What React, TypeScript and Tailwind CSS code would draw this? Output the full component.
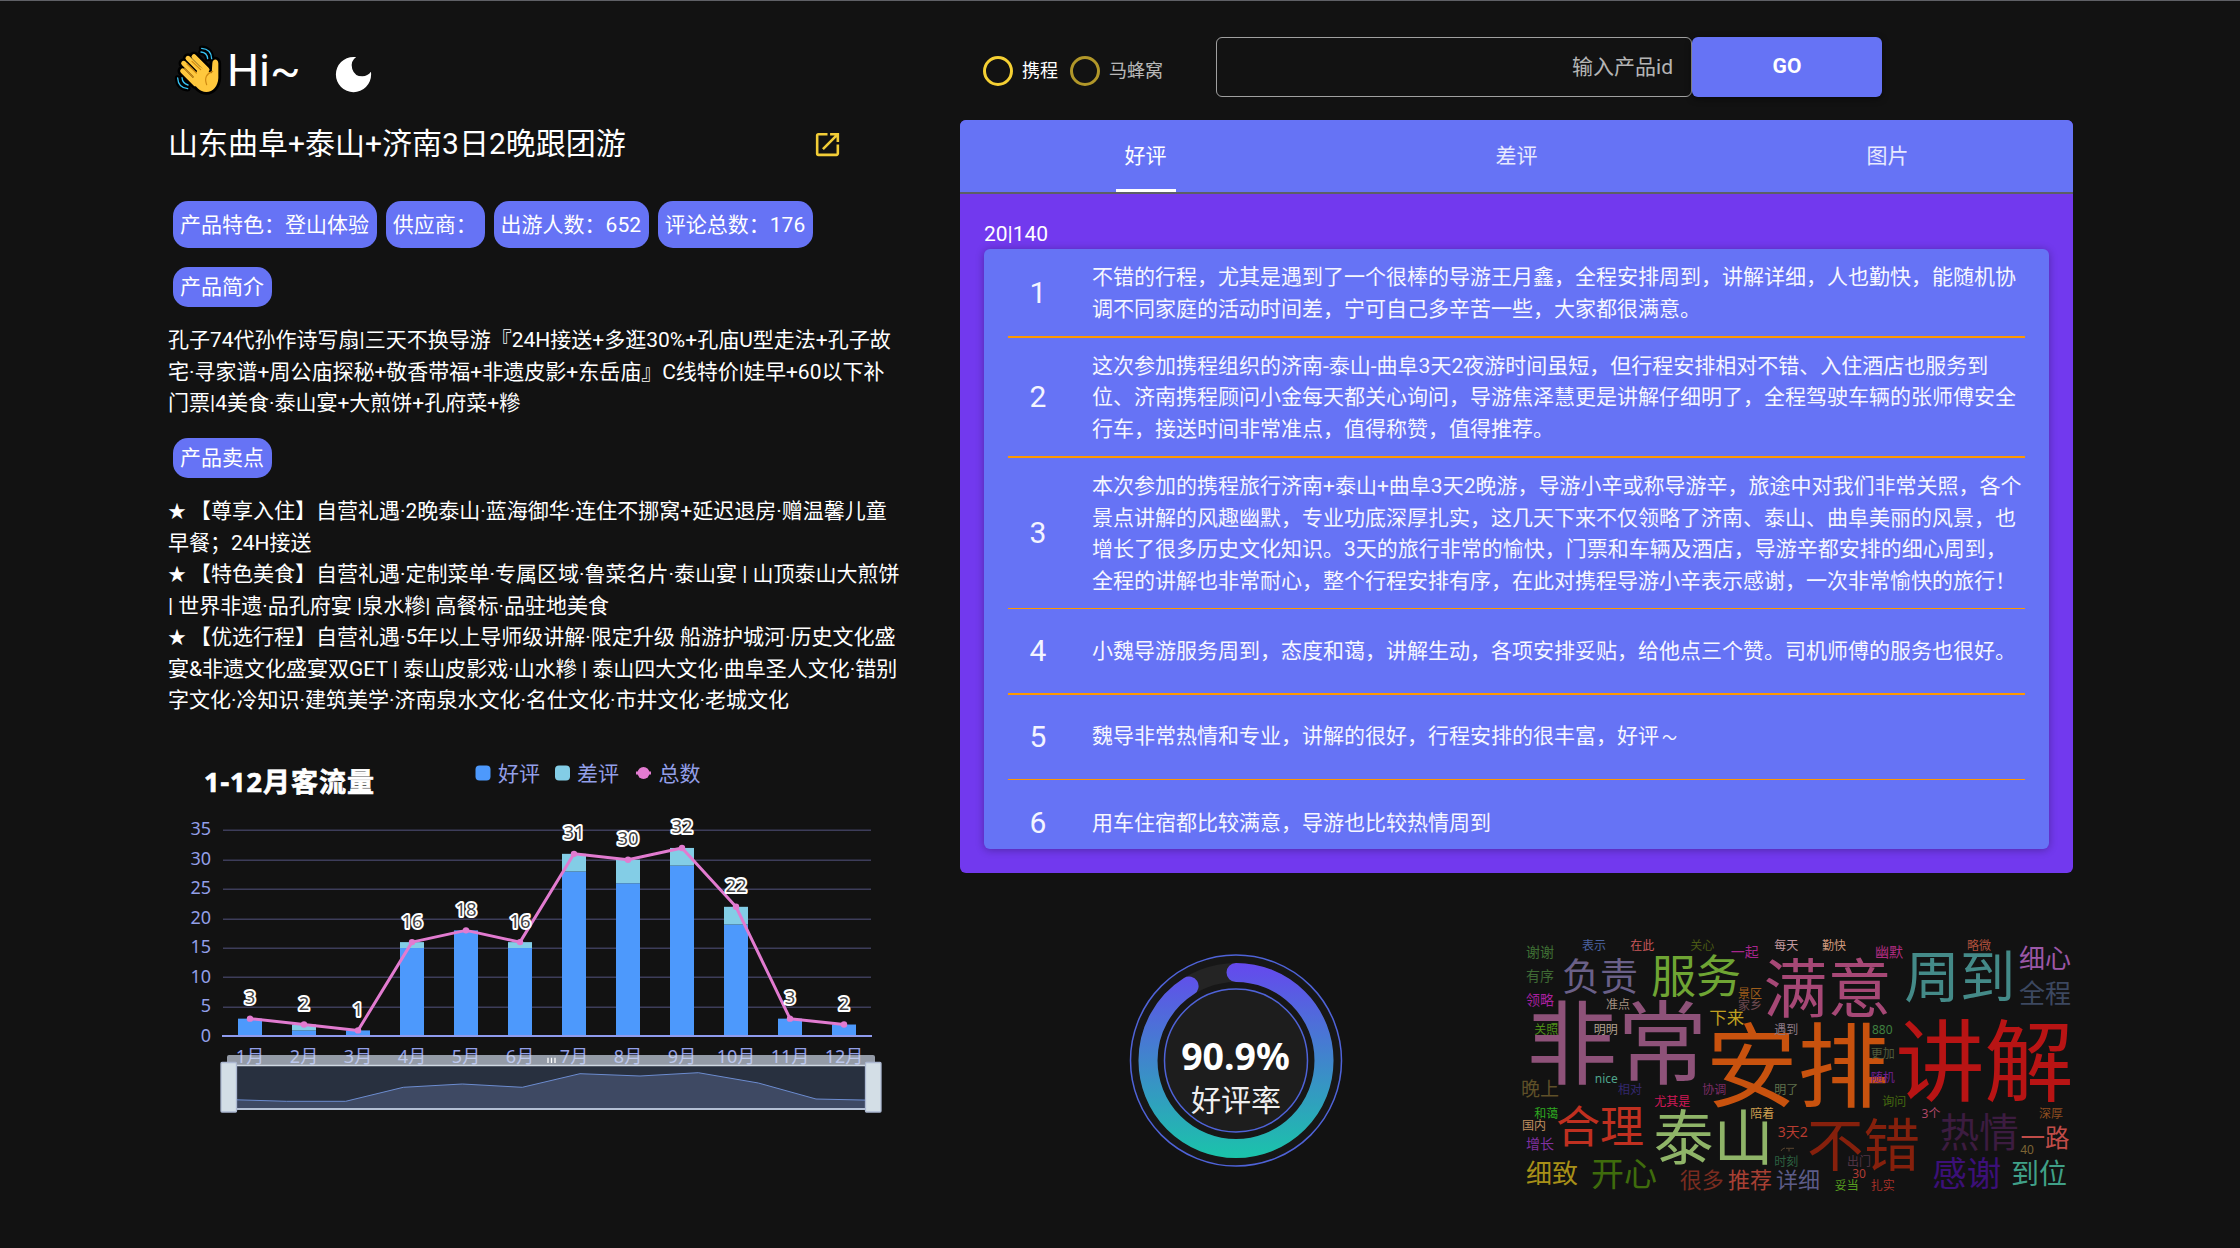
import { MdDarkMode, MdOpenInNew } from "react-icons/md";

const CHIPS = ["产品特色：登山体验", "供应商：", "出游人数：652", "评论总数：176"];

const INTRO = [
  "孔子74代孙作诗写扇|三天不换导游『24H接送+多逛30%+孔庙U型走法+孔子故",
  "宅·寻家谱+周公庙探秘+敬香带福+非遗皮影+东岳庙』C线特价|娃早+60以下补",
  "门票|4美食·泰山宴+大煎饼+孔府菜+糝",
];

const SELLING = [
  { star: true, text: "【尊享入住】自营礼遇·2晚泰山·蓝海御华·连住不挪窝+延迟退房·赠温馨儿童" },
  { star: false, text: "早餐；24H接送" },
  { star: true, text: "【特色美食】自营礼遇·定制菜单·专属区域·鲁菜名片·泰山宴 | 山顶泰山大煎饼" },
  { star: false, text: "| 世界非遗·品孔府宴 |泉水糝| 高餐标·品驻地美食" },
  { star: true, text: "【优选行程】自营礼遇·5年以上导师级讲解·限定升级 船游护城河·历史文化盛" },
  { star: false, text: "宴&非遗文化盛宴双GET | 泰山皮影戏·山水糝 | 泰山四大文化·曲阜圣人文化·错别" },
  { star: false, text: "字文化·冷知识·建筑美学·济南泉水文化·名仕文化·市井文化·老城文化" },
];

const COMMENTS = [
  {
    row: "h-[89px] border-b-2",
    lines: [
      "不错的行程，尤其是遇到了一个很棒的导游王月鑫，全程安排周到，讲解详细，人也勤快，能随机协",
      "调不同家庭的活动时间差，宁可自己多辛苦一些，大家都很满意。",
    ],
  },
  {
    row: "h-[120px] border-b-2",
    lines: [
      "这次参加携程组织的济南-泰山-曲阜3天2夜游时间虽短，但行程安排相对不错、入住酒店也服务到",
      "位、济南携程顾问小金每天都关心询问，导游焦泽慧更是讲解仔细明了，全程驾驶车辆的张师傅安全",
      "行车，接送时间非常准点，值得称赞，值得推荐。",
    ],
  },
  {
    row: "h-[151px] border-b",
    lines: [
      "本次参加的携程旅行济南+泰山+曲阜3天2晚游，导游小辛或称导游辛，旅途中对我们非常关照，各个",
      "景点讲解的风趣幽默，专业功底深厚扎实，这几天下来不仅领略了济南、泰山、曲阜美丽的风景，也",
      "增长了很多历史文化知识。3天的旅行非常的愉快，门票和车辆及酒店，导游辛都安排的细心周到，",
      "全程的讲解也非常耐心，整个行程安排有序，在此对携程导游小辛表示感谢，一次非常愉快的旅行！",
    ],
  },
  {
    row: "h-[86px] border-b-2",
    lines: ["小魏导游服务周到，态度和蔼，讲解生动，各项安排妥贴，给他点三个赞。司机师傅的服务也很好。"],
  },
  {
    row: "h-[85px] border-b",
    lines: ["魏导非常热情和专业，讲解的很好，行程安排的很丰富，好评"],
    wave: true,
  },
  { row: "h-[86px]", lines: ["用车住宿都比较满意，导游也比较热情周到"] },
];

const MONTHS = [
  [3, 0], [1, 1], [1, 0], [15, 1], [18, 0], [15, 1],
  [28, 3], [26, 4], [29, 3], [19, 3], [3, 0], [2, 0],
];

const ZOOM_LINE =
  "227,1099.5 286.5,1101.3 345.7,1101.3 403.3,1087.3 462.3,1084 522.3,1087.3 580,1073.7 640,1076 698.3,1072.7 758.3,1083 816,1099 875,1100.3";

/* word, centre x, centre y, font size, colour */
const WORDS: [string, number, number, number, string][] = [
  ["谢谢", 1540, 951.3, 14, "#3f7034"],
  ["表示", 1594, 944.7, 12, "#4b63a0"],
  ["在此", 1642.3, 944.7, 12, "#c8585a"],
  ["关心", 1702.3, 944.7, 12, "#4a5a14"],
  ["一起", 1744.7, 951, 14, "#a8258c"],
  ["每天", 1786.3, 944.7, 12, "#c49aa0"],
  ["负责", 1600, 974.7, 38, "#6a6088"],
  ["服务", 1696, 975.7, 45, "#6fa534"],
  ["有序", 1540, 975.3, 14, "#3f6a34"],
  ["领略", 1540, 999, 14, "#a820a0"],
  ["非常", 1617, 1042.3, 90.5, "#8e5279"],
  ["准点", 1618, 1004.3, 12, "#a39080"],
  ["关照", 1546.3, 1028.7, 12, "#4f9018"],
  ["明明", 1605.7, 1028.7, 12, "#b0a090"],
  ["景区", 1750, 992.7, 12, "#a05f1c"],
  ["家乡", 1750, 1004.7, 12, "#6e4a50"],
  ["下来", 1726.7, 1017.3, 17.5, "#c0a020"],
  ["安排", 1797.5, 1065.3, 91.5, "#c8520e"],
  ["遇到", 1786.3, 1028.7, 12, "#8c7a86"],
  ["nice", 1606.3, 1077.5, 12, "#4fa58c"],
  ["晚上", 1540, 1088.3, 19, "#5f5028"],
  ["相对", 1630, 1088.7, 12, "#33286e"],
  ["协调", 1714.3, 1088.7, 12, "#7a2c64"],
  ["明了", 1786.3, 1088.7, 12, "#60714c"],
  ["尤其是", 1672.3, 1100.7, 12, "#d01858"],
  ["和蔼", 1546.3, 1113, 12, "#2ea820"],
  ["国内", 1534, 1124.7, 12, "#c09060"],
  ["合理", 1600, 1125.7, 44, "#c03020"],
  ["泰山", 1713.5, 1137, 60, "#8fb468"],
  ["陪着", 1762.3, 1112.7, 12, "#d0a050"],
  ["3天2", 1792.7, 1131, 14, "#b83c30"],
  ["增长", 1540, 1143, 14, "#8030a0"],
  ["细致", 1552, 1173, 26, "#a89018"],
  ["开心", 1624, 1172.7, 33, "#3f6c0c"],
  ["很多", 1701.7, 1179.3, 22, "#7a2c20"],
  ["推荐", 1750, 1179.3, 22, "#a84034"],
  ["详细", 1798, 1179.3, 22, "#5c5c88"],
  ["时刻", 1786.3, 1160.7, 12, "#2c6040"],
  ["勤快", 1834, 944.7, 12, "#d09a7c"],
  ["幽默", 1889, 951.3, 14, "#b02c80"],
  ["略微", 1979, 944.7, 12, "#b0503c"],
  ["满意", 1827.5, 987.3, 64, "#a64876"],
  ["周到", 1959.7, 976, 55.5, "#448a88"],
  ["细心", 2045, 957.3, 26, "#9c58a8"],
  ["全程", 2045, 992.7, 26, "#3c4860"],
  ["880", 1882.3, 1028.7, 12, "#3f8040"],
  ["更加", 1882.7, 1052.7, 12, "#505c3c"],
  ["随机", 1882.7, 1076.7, 12, "#702090"],
  ["询问", 1894.3, 1100.7, 12, "#456810"],
  ["讲解", 1984.5, 1060, 89, "#b81414"],
  ["3个", 1931, 1112.7, 12, "#b04868"],
  ["热情", 1979.3, 1131.3, 39.5, "#3c1c40"],
  ["深厚", 2051, 1112.7, 12, "#904e20"],
  ["不错", 1863.5, 1144.2, 56.5, "#86200c"],
  ["一路", 2045, 1137.3, 24.5, "#c04c48"],
  ["40", 2027, 1148.7, 12, "#7c6434"],
  ["感谢", 1966.7, 1172.3, 34.5, "#3c1078"],
  ["到位", 2039, 1173.3, 28, "#40a088"],
  ["出门", 1859, 1160.7, 12, "#503444"],
  ["30", 1859, 1172.7, 12, "#b03c34"],
  ["妥当", 1846.7, 1185, 12, "#58a020"],
  ["扎实", 1882.7, 1185, 12, "#a83028"],
];

function WavingHand() {
  const fingers = "M101 62 L140 101 M83 67 L125 109 M70 82 L112 124 M67 105 L105 143";
  const palm =
    "M118 92 L154 112 L156 82 C157 67 173 67 174 82 L174 126 C173 150 158 168 138 168 C118 168 106 152 94 132 Z";
  const waves =
    "M124 37 C141 38 153 49 154 68 M122 48 C133 49 141 57 142 68 M52 126 C53 145 64 156 82 158 M65 125 C66 137 72 144 83 147";
  return (
    <svg className="h-[52px] w-[49px] shrink-0" viewBox="38 24 147 156">
      <g stroke="#000" strokeLinecap="round" strokeLinejoin="round" fill="none">
        <path d={fingers} strokeWidth="31" />
        <path d={palm} fill="#000" strokeWidth="17" />
        <path d={waves} strokeWidth="17" />
      </g>
      <path d={fingers} stroke="#ffc83d" strokeWidth="15" strokeLinecap="round" fill="none" />
      <path d={palm} fill="#ffc83d" />
      <g stroke="#d08a12" strokeWidth="3.6" strokeLinecap="round" fill="none">
        <path d="M73 98 L98 123 M80 84 L108 111 M95 76 L121 101" />
        <path d="M157 106 C139 112 131 126 139 146" />
      </g>
      <path d={waves} stroke="#35c1f1" strokeWidth="4" strokeLinecap="round" fill="none" />
    </svg>
  );
}

function TrafficChart() {
  const x = (i: number) => 250 + 54 * i;
  const y = (v: number) => 1036.3 - 5.886 * v;
  const totals = MONTHS.map(([a, b]) => a + b);
  return (
    <svg
      className="h-[390px] w-[740px] font-['Noto_Sans','Noto_Sans_CJK_SC',sans-serif]"
      viewBox="168 740 740 390"
    >
      <text x="204" y="792" fontSize="27" fontWeight="700" fill="#fff" stroke="#fff" strokeWidth="0.7" textLength="170">
        1-12月客流量
      </text>
      <g fontSize="21" fill="#929fe8">
        <rect x="475.5" y="765.5" width="15" height="15" rx="4" fill="#4d99fc" />
        <text x="498" y="780.5">好评</text>
        <rect x="555" y="765.5" width="15" height="15" rx="4" fill="#83cde6" />
        <text x="577" y="780.5">差评</text>
        <path d="M636 773 H651" stroke="#e27bd0" strokeWidth="3" />
        <circle cx="643.5" cy="773" r="6" fill="#e27bd0" />
        <text x="658.5" y="780.5">总数</text>
      </g>
      {[5, 10, 15, 20, 25, 30, 35].map((v) => (
        <path key={v} d={`M223 ${Math.round(y(v)) + 0.3} H871`} stroke="#3d3d5a" strokeWidth="1.5" />
      ))}
      {[0, 5, 10, 15, 20, 25, 30, 35].map((v) => (
        <text key={v} x="211" y={y(v) + 5.2} fontSize="18" textAnchor="end" fill="#929fe8">
          {v}
        </text>
      ))}
      {MONTHS.map(([good, bad], i) => (
        <g key={i}>
          <rect x={x(i) - 12} y={y(good)} width="24" height={1036 - y(good)} fill="#4d99fc" />
          <rect x={x(i) - 12} y={y(good + bad)} width="24" height={y(good) - y(good + bad)} fill="#83cde6" />
          <text x={x(i)} y="1063" fontSize="18" textAnchor="middle" fill="#929fe8">
            {i + 1}月
          </text>
        </g>
      ))}
      <path d="M222 1036 H872" stroke="#8f9bee" strokeWidth="1.8" />
      <polyline
        points={totals.map((t, i) => `${x(i)},${y(t)}`).join(" ")}
        fill="none"
        stroke="#e27bd0"
        strokeWidth="3"
        strokeLinejoin="bevel"
      />
      {totals.map((t, i) => (
        <g key={i}>
          <circle cx={x(i)} cy={y(t)} r="3.2" fill="#e27bd0" />
          <text
            x={x(i)}
            y={y(t) - 14.5}
            fontSize="18.5"
            textAnchor="middle"
            fill="#444"
            stroke="#fff"
            strokeWidth="4"
            strokeLinejoin="round"
            paintOrder="stroke"
          >
            {t}
          </text>
        </g>
      ))}
      <path d="M227 1065 V1057 Q227 1055 229 1055 H873 Q875 1055 875 1057 V1065 Z" fill="#d2dbee" fillOpacity="0.68" />
      <path d="M548 1057.7 V1063 M551.5 1057.7 V1063 M555 1057.7 V1063" stroke="#fff" strokeWidth="1.3" />
      <rect x="227" y="1065" width="648" height="44" fill="#28303f" />
      <polygon points={`227,1108 ${ZOOM_LINE} 875,1108`} fill="#3e4963" />
      <polyline points={ZOOM_LINE} fill="none" stroke="#6c8cd0" strokeWidth="1" />
      <path d="M227 1065.5 H875" stroke="#cfd8e2" strokeWidth="1.4" />
      <path d="M227 1109 H875" stroke="#b3bfd4" strokeWidth="1.8" />
      <rect x="221" y="1062.5" width="15.5" height="49.5" rx="1" fill="#d3dee6" stroke="#acb8d1" strokeWidth="1.3" />
      <rect x="865.5" y="1062.5" width="15.5" height="49.5" rx="1" fill="#d3dee6" stroke="#acb8d1" strokeWidth="1.3" />
    </svg>
  );
}

function RateRing() {
  const r = 88;
  const c = 2 * Math.PI * r;
  return (
    <svg
      className="h-[240px] w-[250px] font-['Noto_Sans','Noto_Sans_CJK_SC',sans-serif]"
      viewBox="1110 940 250 240"
    >
      <defs>
        {/* runs along x because the arc itself is turned by -90 degrees */}
        <linearGradient id="rate" gradientUnits="userSpaceOnUse" x1="1334" y1="0" x2="1138" y2="0">
          <stop offset="0" stopColor="#6548ee" />
          <stop offset="1" stopColor="#1ac4aa" />
        </linearGradient>
      </defs>
      <circle cx="1236" cy="1060.5" r="105.5" fill="#171717" stroke="#4f63d8" strokeWidth="1.5" />
      <circle cx="1236" cy="1060.5" r={r} fill="none" stroke="#242424" strokeWidth="19" />
      <circle
        cx="1236"
        cy="1060.5"
        r={r}
        fill="none"
        stroke="url(#rate)"
        strokeWidth="19"
        strokeLinecap="round"
        strokeDasharray={`${c * 0.909} ${c}`}
        transform="rotate(-90 1236 1060.5)"
      />
      <circle cx="1236" cy="1060.5" r="71.5" fill="#1d1d1d" stroke="#4f63d8" strokeWidth="1.5" />
      <text x="1235.5" y="1070.3" fontSize="37.5" fontWeight="700" fill="#fff" textAnchor="middle">
        90.9%
      </text>
      <text x="1236" y="1111.3" fontSize="30" fill="#eee" textAnchor="middle">
        好评率
      </text>
    </svg>
  );
}

function WordCloud() {
  return (
    <svg
      className="h-[270px] w-[570px] font-['Noto_Sans','Noto_Sans_CJK_SC',sans-serif]"
      viewBox="1510 930 570 270"
    >
      {WORDS.map(([word, cx, cy, size, color]) => (
        <text key={word} x={cx} y={cy + size * 0.375 + 0.6} fontSize={size} fill={color} textAnchor="middle">
          {word}
        </text>
      ))}
      <path d="M1781 1151 Q1782 1148.5 1785 1148 M1786 1148.3 H1794 M1789 1148.5 V1151.5" stroke="#5a4630" fill="none" />
    </svg>
  );
}

function SectionChip({ label }: { label: string }) {
  return (
    <div className="ml-[5px] flex h-10 w-[99px] items-center rounded-[15px] bg-[#6673f5] pl-[7px] pt-[2px]">
      {label}
    </div>
  );
}

function ProductColumn() {
  return (
    <section className="flex w-[740px] shrink-0 flex-col">
      <div className="mt-[43px] flex h-[52px] items-start pl-[5px]">
        <WavingHand />
        <span className="ml-[5px] mt-px w-[75px] text-[45px] leading-[52px]">Hi~</span>
        <MdDarkMode className="ml-[28px] mt-[7px] size-[47px]" />
      </div>
      <div className="mt-[25px] flex h-[46px] items-center">
        <h1 className="w-[644px] text-[30px]">山东曲阜+泰山+济南3日2晚跟团游</h1>
        <MdOpenInNew className="mt-px size-[31px] text-[#f2cd37]" />
      </div>
      <div className="mt-[34px] flex gap-[9px] pl-[5px]">
        {CHIPS.map((chip) => (
          <div
            key={chip}
            className="flex h-[47px] items-center rounded-[15px] bg-[#6673f5] pl-[7px] pr-[7.8px] pt-[2px]"
          >
            {chip}
          </div>
        ))}
      </div>
      <div className="mt-[19px]">
        <SectionChip label="产品简介" />
      </div>
      <div className="mt-[18px] h-[94px]">
        {INTRO.map((line) => (
          <p key={line}>{line}</p>
        ))}
      </div>
      <div className="mt-[19px]">
        <SectionChip label="产品卖点" />
      </div>
      <div className="mt-[18px] h-[220px]">
        {SELLING.map(({ star, text }) => (
          <p key={text}>
            {star && <span className="inline-block w-[22px] text-[18px]">★</span>}
            {text}
          </p>
        ))}
      </div>
      <div className="mt-[24px]">
        <TrafficChart />
      </div>
    </section>
  );
}

function SearchBar() {
  return (
    <div className="mt-9 flex h-[60px] items-center">
      <div className="flex w-[256px] items-center pl-[23px] pt-2 text-[18px]">
        <span className="size-[30px] rounded-full border-3 border-[#f5d033]" />
        <span className="ml-[9px] w-[48px]">携程</span>
        <span className="size-[30px] rounded-full border-3 border-[#f5d033] opacity-70" />
        <span className="ml-[9px] opacity-70">马蜂窝</span>
      </div>
      <div className="flex h-full w-[476px] items-center justify-end rounded-md border border-white/60 pr-[18px] pt-[2px] text-white/70">
        输入产品id
      </div>
      <button className="h-full w-[190px] rounded-md bg-[#6673f5] font-bold shadow-[0_2px_6px_rgba(0,0,0,0.5)]">
        GO
      </button>
    </div>
  );
}

function ReviewPanel() {
  return (
    <div className="mt-[23px] flex h-[753px] w-[1113px] flex-col overflow-hidden rounded-md bg-[#7239ee]">
      <div className="grid h-[72px] shrink-0 grid-cols-3 bg-[#6673f5]">
        <div className="relative flex items-center justify-center pt-[2px]">
          好评
          <span className="absolute bottom-0 h-[3px] w-[60px] bg-white" />
        </div>
        <div className="flex items-center justify-center pt-[2px] text-white/85">差评</div>
        <div className="flex items-center justify-center pt-[2px] text-white/85">图片</div>
      </div>
      <div className="h-[2px] shrink-0 bg-[#5c5f66]" />
      <div className="px-6 pt-[25px]">
        <div className="h-[30px]">20|140</div>
        <div className="h-[600px] overflow-hidden rounded-md bg-[#6673f5] px-6 shadow-[0_1px_8px_rgba(0,0,0,0.3)]">
          {COMMENTS.map(({ row, lines, wave }, i) => (
            <div key={i} className={`flex items-center border-[#ff9800] ${row}`}>
              <div className="w-[60px] text-center text-[30px] text-[#f3f4ff]">{i + 1}</div>
              <div className="ml-6 pt-[2px] text-[#f6f7ff]">
                {lines.map((line) => (
                  <p key={line}>
                    {line}
                    {wave && <span className="inline-block w-[21px] text-center text-[15px]">～</span>}
                  </p>
                ))}
              </div>
            </div>
          ))}
        </div>
      </div>
    </div>
  );
}

export default function App() {
  return (
    <main className="flex h-[1248px] w-[2240px] overflow-hidden whitespace-nowrap border-t border-[#5f6066] bg-[#121212] pl-[168px] font-[Roboto,'Noto_Sans_CJK_SC',sans-serif] text-[21px] leading-[31.5px] text-white [text-spacing-trim:space-all]">
      <ProductColumn />
      <section className="ml-[52px] flex w-[1130px] flex-col">
        <SearchBar />
        <ReviewPanel />
        <div className="mt-[57px] flex h-[270px] pl-[150px]">
          <div className="mt-[10px] w-[400px]">
            <RateRing />
          </div>
          <WordCloud />
        </div>
      </section>
    </main>
  );
}
